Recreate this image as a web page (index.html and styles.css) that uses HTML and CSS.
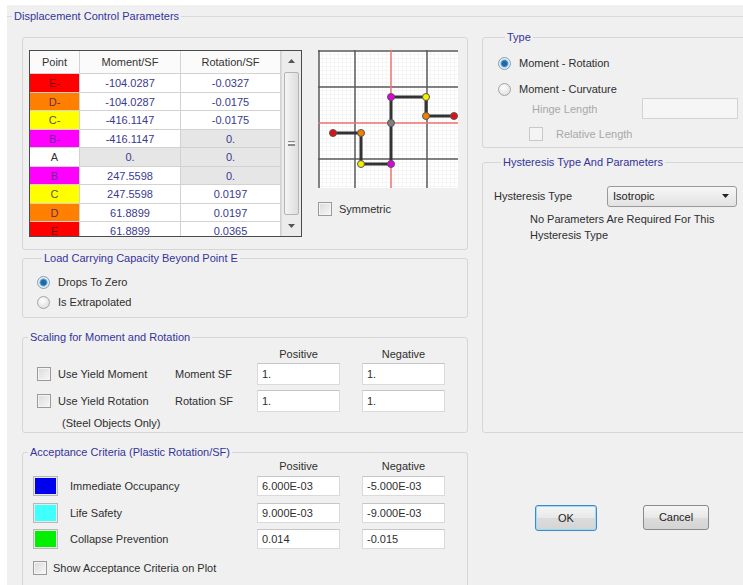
FILE: index.html
```html
<!DOCTYPE html>
<html lang="en">
<head>
<meta charset="utf-8">
<title>Displacement Control Parameters</title>
<link rel="stylesheet" href="styles.css">
</head>
<body>
<div class="dialog">
  <fieldset class="outer">
    <legend>Displacement Control Parameters</legend>
    <div class="columns">

      <div class="col-left">
        <!-- backbone curve table and preview plot -->
        <div class="panel curve-panel">
          <div class="grid">
            <div class="grid-body">
              <div class="row head"><span class="c-pt">Point</span><span class="c-m">Moment/SF</span><span class="c-r">Rotation/SF</span></div>
              <div class="row"><span class="c-pt pt-red">E-</span><span class="c-m">-104.0287</span><span class="c-r">-0.0327</span></div>
              <div class="row"><span class="c-pt pt-orange">D-</span><span class="c-m">-104.0287</span><span class="c-r">-0.0175</span></div>
              <div class="row"><span class="c-pt pt-yellow">C-</span><span class="c-m">-416.1147</span><span class="c-r">-0.0175</span></div>
              <div class="row"><span class="c-pt pt-magenta">B-</span><span class="c-m">-416.1147</span><span class="c-r ro">0.</span></div>
              <div class="row"><span class="c-pt pt-white">A</span><span class="c-m ro">0.</span><span class="c-r ro">0.</span></div>
              <div class="row"><span class="c-pt pt-magenta">B</span><span class="c-m">247.5598</span><span class="c-r ro">0.</span></div>
              <div class="row"><span class="c-pt pt-yellow">C</span><span class="c-m">247.5598</span><span class="c-r">0.0197</span></div>
              <div class="row"><span class="c-pt pt-orange">D</span><span class="c-m">61.8899</span><span class="c-r">0.0197</span></div>
              <div class="row"><span class="c-pt pt-red">E</span><span class="c-m">61.8899</span><span class="c-r">0.0365</span></div>
            </div>
            <div class="vscroll">
              <span class="sb-btn"><svg width="7" height="4" viewBox="0 0 7 4"><path d="M0 4 L3.5 0 L7 4 Z" fill="#555"/></svg></span>
              <span class="sb-thumb"><span class="grip"></span></span>
              <span class="sb-btn"><svg width="7" height="4" viewBox="0 0 7 4"><path d="M0 0 L3.5 4 L7 0 Z" fill="#555"/></svg></span>
            </div>
          </div>

          <div class="plot-col">
            <svg class="plot" width="140" height="138" viewBox="0 0 140 138">
              <defs>
                <pattern id="minor" x="1" y="1" width="4" height="4" patternUnits="userSpaceOnUse">
                  <path d="M4 0 V4 M0 4 H4" stroke="#ececec" stroke-width="1" fill="none"/>
                </pattern>
              </defs>
              <rect width="140" height="138" fill="#fff"/>
              <rect width="140" height="138" fill="url(#minor)"/>
              <g stroke="#5a5a5a" stroke-width="1.5">
                <line x1="1" y1="0" x2="1" y2="138"/>
                <line x1="37" y1="0" x2="37" y2="138"/>
                <line x1="109" y1="0" x2="109" y2="138"/>
                <line x1="0" y1="1" x2="140" y2="1"/>
                <line x1="0" y1="37" x2="140" y2="37"/>
                <line x1="0" y1="109" x2="140" y2="109"/>
              </g>
              <g stroke="#f07070" stroke-width="1.5">
                <line x1="73" y1="0" x2="73" y2="138"/>
                <line x1="0" y1="73" x2="140" y2="73"/>
              </g>
              <polyline points="15,83 43,83 43,114 73,114 73,73 73,47 108,47 108,66 136,66" fill="none" stroke="#333" stroke-width="3"/>
              <g stroke="#555" stroke-width="1">
                <circle cx="15" cy="83" r="3.5" fill="#e01010"/>
                <circle cx="43" cy="83" r="3.5" fill="#f08000"/>
                <circle cx="43" cy="114" r="3.5" fill="#f4f000"/>
                <circle cx="73" cy="114" r="3.5" fill="#e000e0"/>
                <circle cx="73" cy="73" r="3.5" fill="#808080"/>
                <circle cx="73" cy="47" r="3.5" fill="#e000e0"/>
                <circle cx="108" cy="47" r="3.5" fill="#f4f000"/>
                <circle cx="108" cy="66" r="3.5" fill="#f08000"/>
                <circle cx="136" cy="66" r="3.5" fill="#e01010"/>
              </g>
            </svg>
            <div class="check-row sym"><span class="check"></span><span>Symmetric</span></div>
          </div>
        </div>

        <fieldset class="group load">
          <legend>Load Carrying Capacity Beyond Point E</legend>
          <div class="radio-row"><span class="radio on"></span><span>Drops To Zero</span></div>
          <div class="radio-row"><span class="radio"></span><span>Is Extrapolated</span></div>
        </fieldset>

        <fieldset class="group scaling">
          <legend>Scaling for Moment and Rotation</legend>
          <div class="hdr-row"><span class="hdr">Positive</span><span class="hdr">Negative</span></div>
          <div class="sf-row">
            <div class="sf-check"><span class="check"></span><span>Use Yield Moment</span></div>
            <span class="sf-label">Moment SF</span>
            <span class="field">1.</span>
            <span class="field">1.</span>
          </div>
          <div class="sf-row second">
            <div class="sf-check"><span class="check"></span><span>Use Yield Rotation</span></div>
            <span class="sf-label">Rotation SF</span>
            <span class="field">1.</span>
            <span class="field">1.</span>
          </div>
          <div class="steel-note">(Steel Objects Only)</div>
        </fieldset>

        <fieldset class="group accept">
          <legend>Acceptance Criteria (Plastic Rotation/SF)</legend>
          <div class="hdr-row"><span class="hdr">Positive</span><span class="hdr">Negative</span></div>
          <div class="ac-row io">
            <span class="swatch sw-io"></span><span class="ac-label">Immediate Occupancy</span>
            <span class="field">6.000E-03</span><span class="field">-5.000E-03</span>
          </div>
          <div class="ac-row ls">
            <span class="swatch sw-ls"></span><span class="ac-label">Life Safety</span>
            <span class="field">9.000E-03</span><span class="field">-9.000E-03</span>
          </div>
          <div class="ac-row cp">
            <span class="swatch sw-cp"></span><span class="ac-label">Collapse Prevention</span>
            <span class="field">0.014</span><span class="field">-0.015</span>
          </div>
          <div class="check-row show"><span class="check"></span><span>Show Acceptance Criteria on Plot</span></div>
        </fieldset>
      </div>

      <div class="col-right">
        <fieldset class="group type">
          <legend>Type</legend>
          <div class="radio-row r1"><span class="radio on"></span><span>Moment - Rotation</span></div>
          <div class="radio-row r2"><span class="radio"></span><span>Moment - Curvature</span></div>
          <div class="hinge-row"><span class="hinge-label">Hinge Length</span><span class="field disabled"></span></div>
          <div class="check-row rel"><span class="check disabled"></span><span class="muted">Relative Length</span></div>
        </fieldset>

        <fieldset class="group hyst">
          <legend>Hysteresis Type And Parameters</legend>
          <div class="hyst-row">
            <span class="hyst-label">Hysteresis Type</span>
            <span class="combo"><span>Isotropic</span><svg width="7" height="4" viewBox="0 0 7 4"><path d="M0 0 L3.5 4 L7 0 Z" fill="#222"/></svg></span>
          </div>
          <p class="hyst-note">No Parameters Are Required For This<br>Hysteresis Type</p>
        </fieldset>

        <div class="buttons">
          <span class="btn default">OK</span>
          <span class="btn">Cancel</span>
        </div>
      </div>

    </div>
  </fieldset>
</div>
</body>
</html>
```

FILE: styles.css
```css
* { box-sizing: border-box; }

html, body { margin: 0; }

body {
  background: #fff;
  font-family: "Liberation Sans", Arial, sans-serif;
  font-size: 11px;
  color: #2e2e2e;
}

.dialog {
  width: 736px;
  height: 580px;
  margin: 5px 0 0 7px;
  padding-top: 5px;
  background: #f0f0f0;
  overflow: hidden;
}

fieldset {
  margin: 0;
  padding: 0;
  min-width: 0;
}

legend {
  padding: 0 2px;
  line-height: 13px;
  color: #34349c;
}

.outer {
  border: 0;
  border-top: 1px solid #d9d9d9;
}

.outer > legend { margin-left: 5px; }

.columns {
  display: flex;
  gap: 14px;
  padding-left: 15px;
}

.col-left {
  width: 446px;
  flex: none;
  padding-top: 14px;
}

.col-right {
  width: 270px;
  flex: none;
}

/* group boxes */
.group {
  border: 1px solid #d6d6d6;
  border-radius: 3px;
}

.group > legend { margin-left: 5px; }
.col-right .group > legend { margin-left: 7px; }

.panel {
  border: 1px solid #d6d6d6;
  border-radius: 3px;
}

/* ---- curve table ---- */
.curve-panel {
  height: 213px;
  display: flex;
  align-items: flex-start;
  gap: 16px;
  padding: 12px 0 0 6px;
}

.grid {
  width: 273px;
  height: 187px;
  border: 1px solid #4a4a4a;
  display: flex;
  background: #fff;
}

.grid-body {
  width: 251px;
  overflow: hidden;
}

.row {
  display: flex;
  height: 18.5px;
  line-height: 18px;
  text-align: center;
  color: #3a3a8e;
}

.row > span {
  border-right: 1px solid #d2d2d2;
  border-bottom: 1px solid #d2d2d2;
  background: #fff;
}

.row.head {
  height: 23px;
  line-height: 22px;
  color: #333;
}

.row.head > span { background: #fbfbfb; }

.c-pt { width: 50px; }
.c-m { width: 101px; }
.c-r { width: 100px; }

.row > span.ro { background: #e6e6e6; }

.row > .pt-red { background: #ff0000; color: #7a0010; }
.row > .pt-orange { background: #ff8000; color: #6a2a40; }
.row > .pt-yellow { background: #ffff00; color: #55553a; }
.row > .pt-magenta { background: #ff00ff; color: #6a2a9a; }
.row > .pt-white { background: #fff; color: #333; }

.vscroll {
  width: 20px;
  display: flex;
  flex-direction: column;
  background: #ececec;
  border-left: 1px solid #dcdcdc;
}

.sb-btn {
  height: 20px;
  display: flex;
  align-items: center;
  justify-content: center;
}

.sb-thumb {
  flex: 1;
  margin: 1px 2px;
  border: 1px solid #b4b4b4;
  border-radius: 2px;
  background: linear-gradient(to right, #f4f4f4, #dedede);
  display: flex;
  align-items: center;
  justify-content: center;
}

.grip {
  width: 7px;
  height: 5px;
  border-top: 1px solid #8a8a8a;
  border-bottom: 1px solid #8a8a8a;
  background: linear-gradient(#fff 0 1px, #8a8a8a 1px 2px, transparent 2px);
  background-position: 0 1px;
  background-repeat: no-repeat;
}

/* ---- plot ---- */
.plot-col {
  display: flex;
  flex-direction: column;
}

.plot { display: block; }

.check-row {
  display: flex;
  align-items: center;
  gap: 7px;
}

.sym {
  margin-top: 14px;
  height: 14px;
}

.check {
  width: 14px;
  height: 14px;
  flex: none;
  border: 1px solid #9a9a9a;
  background: linear-gradient(135deg, #dadada, #f8f8f8);
  box-shadow: inset 0 0 0 1px #f4f4f4;
}

.check.disabled {
  border-color: #c8c8c8;
  background: #f4f4f4;
}

.radio {
  width: 13px;
  height: 13px;
  flex: none;
  border-radius: 50%;
  border: 1px solid #a4a4a4;
  background: radial-gradient(circle at 40% 35%, #fff, #d6d6d6);
}

.radio.on {
  border-color: #7d9fbc;
  background: radial-gradient(circle, #1e6aa8 0 2.5px, #6fa7d4 3.5px, #e6eef5 4.5px);
}

.radio-row {
  display: flex;
  align-items: center;
  gap: 8px;
  height: 20px;
}

/* ---- load carrying capacity ---- */
.load {
  margin-top: 2px;
  padding: 7px 0 5px 14px;
}

/* ---- scaling ---- */
.scaling {
  margin-top: 13px;
  padding: 3px 0 2px 0;
}

.hdr-row {
  display: flex;
  height: 14px;
  line-height: 14px;
  padding-left: 234px;
  gap: 22px;
}

.hdr {
  width: 83px;
  text-align: center;
}

.sf-row {
  display: flex;
  align-items: center;
  height: 22px;
  margin-top: 2px;
  padding-left: 14px;
}

.sf-row.second { margin-top: 5px; }

.sf-check {
  width: 138px;
  display: flex;
  align-items: center;
  gap: 7px;
}

.sf-label { width: 82px; }

.field {
  width: 83px;
  height: 22px;
  line-height: 20px;
  padding-left: 4px;
  background: #fff;
  border: 1px solid #dadada;
  border-top-color: #c6c6c6;
}

.field + .field { margin-left: 22px; }

.steel-note {
  height: 14px;
  line-height: 14px;
  margin-top: 4px;
  padding-left: 39px;
}

/* ---- acceptance criteria (box runs past the bottom edge of the dialog) ---- */
.accept {
  margin-top: 13px;
  height: 190px;
}

.ac-row {
  display: flex;
  align-items: center;
  height: 20px;
  padding-left: 10px;
}

.ac-row.io { margin-top: 3px; }
.ac-row.ls { margin-top: 7px; }
.ac-row.cp { margin-top: 6px; }

.ac-row .field { height: 20px; line-height: 18px; }

.swatch {
  width: 25px;
  height: 20px;
  border: 1px solid #b8b8b8;
  box-shadow: inset 0 0 0 1px #e8e8e8;
}

.sw-io { background: #0000f0; }
.sw-ls { background: #40ffff; }
.sw-cp { background: #00f000; }

.ac-label {
  width: 199px;
  padding-left: 12px;
}

.show {
  margin-top: 12px;
  height: 14px;
  padding-left: 10px;
  gap: 6px;
}

/* ---- type ---- */
.type {
  margin-top: 8px;
  padding: 9px 0 5px 15px;
}

.type .r2 {
  margin-top: 7px;
  height: 18px;
}

.hinge-row {
  display: flex;
  align-items: center;
  height: 21px;
  padding-left: 34px;
}

.hinge-label {
  width: 110px;
  color: #a8a8a8;
}

.field.disabled {
  width: 96px;
  height: 21px;
  background: #f6f6f6;
  border-color: #d2d2d2;
}

.rel {
  margin-top: 7px;
  height: 16px;
  padding-left: 31px;
  gap: 13px;
}

.muted { color: #a8a8a8; }

/* ---- hysteresis ---- */
.hyst {
  margin-top: 8px;
  height: 277px;
  padding: 16px 0 0 11px;
}

.hyst-row {
  display: flex;
  align-items: center;
  height: 22px;
}

.hyst-label { width: 113px; }

.combo {
  width: 130px;
  height: 21px;
  display: flex;
  align-items: center;
  justify-content: space-between;
  padding: 0 7px 0 5px;
  border: 1px solid #9a9a9a;
  border-radius: 3px;
  background: linear-gradient(#f7f7f7, #e2e2e2);
  color: #222;
}

.hyst-note {
  margin: 4px 0 0 36px;
  line-height: 16px;
}

/* ---- buttons ---- */
.buttons {
  display: flex;
  align-items: flex-start;
  margin-top: 72px;
  padding-left: 53px;
  gap: 46px;
}

.btn {
  width: 66px;
  height: 25px;
  line-height: 23px;
  text-align: center;
  border: 1px solid #8a8a8a;
  border-radius: 3px;
  background: linear-gradient(#f6f6f6 0%, #e8e8e8 50%, #dcdcdc 51%, #d4d4d4 100%);
  color: #222;
}

.btn.default {
  width: 62px;
  height: 26px;
  line-height: 24px;
  border-color: #3c8bc4;
  box-shadow: inset 0 0 0 1px #9fdaf6;
}
```
